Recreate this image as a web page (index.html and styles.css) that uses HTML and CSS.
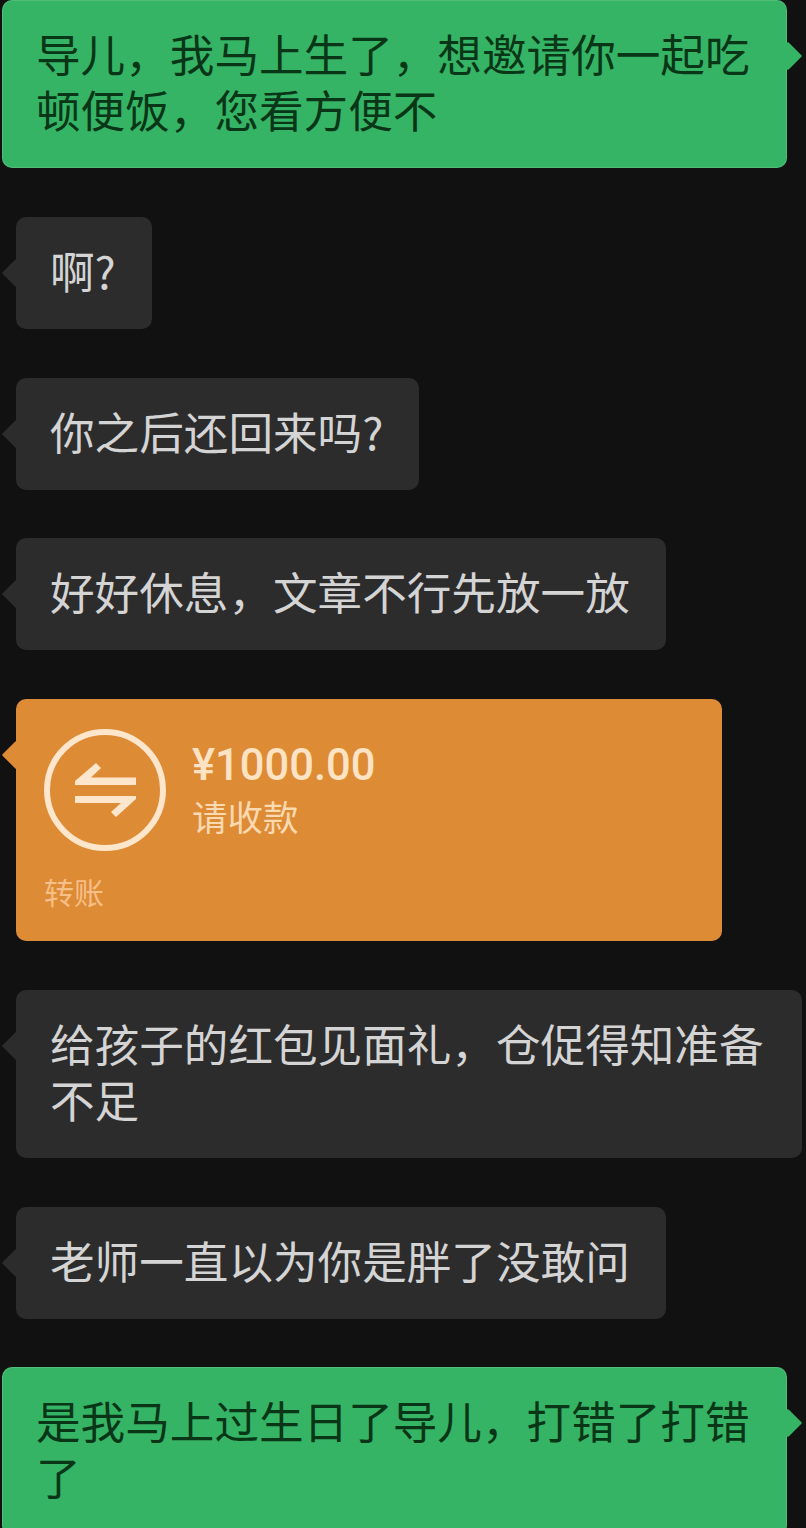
FILE: index.html
```html
<!DOCTYPE html>
<html lang="zh-CN">
<head>
<meta charset="utf-8">
<title>聊天记录</title>
<link rel="stylesheet" href="styles.css">
</head>
<body>
<main class="chat">
  <div class="bubble sent">导儿，我马上生了，想邀请你一起吃顿便饭，您看方便不</div>
  <div class="bubble received">啊?</div>
  <div class="bubble received">你之后还回来吗?</div>
  <div class="bubble received">好好休息，文章不行先放一放</div>
  <div class="transfer">
    <div class="transfer-main">
      <svg class="transfer-icon" viewBox="0 0 122 122" aria-hidden="true">
        <circle class="ring" cx="61" cy="61" r="58" />
        <path class="arrow" d="M92 48.5H47L57 39L52 34L31 52V56H92Z" />
        <path class="arrow" d="M31 67H92V70L72 88L67 83L77 74H31Z" />
      </svg>
      <div class="transfer-info">
        <div class="amount">¥1000.00</div>
        <div class="note">请收款</div>
      </div>
    </div>
    <div class="transfer-label">转账</div>
  </div>
  <div class="bubble received wide">给孩子的红包见面礼，仓促得知准备不足</div>
  <div class="bubble received">老师一直以为你是胖了没敢问</div>
  <div class="bubble sent">是我马上过生日了导儿，打错了打错了</div>
</main>
</body>
</html>
```

FILE: styles.css
```css
html, body {
  margin: 0;
  padding: 0;
  background: #111112;
}

body {
  width: 806px;
  height: 1528px;
  overflow: hidden;
  font-family: "Noto Sans CJK SC", "Noto Sans", sans-serif;
}

.chat {
  display: flex;
  flex-direction: column;
  align-items: flex-start;
  gap: 48.75px;
}

.bubble,
.transfer {
  position: relative;
  box-sizing: border-box;
  border-radius: 10px;
}

.bubble {
  padding: 25px 36px 31px 34px;
  font-size: 44.6px;
  line-height: 56px;
}

.bubble::before,
.transfer::before {
  content: "";
  position: absolute;
  top: 46px;
  width: 20px;
  height: 20px;
  border-radius: 1px;
  background: inherit;
  transform: rotate(45deg);
}

.sent {
  width: 785px;
  margin-left: 2px;
  background: #36b465;
  color: #0a3618;
  box-shadow: inset 0 0 0 1px rgba(255, 255, 255, 0.14);
}

.sent::before {
  right: -11px;
}

.received {
  margin-left: 16px;
  max-width: 786px;
  background: #2c2c2d;
  color: #d4d4d4;
}

.received.wide {
  width: 786px;
}

.received::before,
.transfer::before {
  left: -10px;
}

.transfer {
  width: 706px;
  height: 242px;
  margin-left: 16px;
  padding: 30px 28px 0;
  background: #de8b35;
}

.transfer-main {
  display: flex;
  align-items: flex-start;
  gap: 26px;
}

.transfer-icon {
  flex: none;
  width: 122px;
  height: 122px;
}

.ring {
  fill: none;
  stroke: #fde6cb;
  stroke-width: 6;
}

.arrow {
  fill: #fde6cb;
}

.transfer-info {
  display: flex;
  flex-direction: column;
  margin-top: 10px;
}

.amount {
  font-family: "Roboto", sans-serif;
  font-size: 43.5px;
  font-weight: 500;
  line-height: 54px;
  color: #fde3c4;
}

.note {
  font-size: 35.5px;
  line-height: 46px;
  color: #fbd9b1;
}

.transfer-label {
  margin-top: 18px;
  font-size: 30px;
  line-height: 44px;
  color: #f6bf88;
}
```
